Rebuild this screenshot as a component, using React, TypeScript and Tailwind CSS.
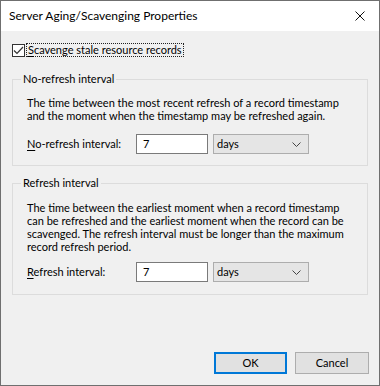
import type { ReactNode } from 'react';

const font = { fontFamily: 'Lato, "Liberation Sans", Arial, sans-serif' };

function Chevron() {
  return (
    <svg width="9" height="5" viewBox="0 0 9 5" className="text-[#444]">
      <path d="M0.5 0.5 L4.5 4.5 L8.5 0.5" fill="none" stroke="currentColor" strokeWidth="1" />
    </svg>
  );
}

function IntervalRow({ label, accel }: { label: string; accel: string }) {
  return (
    <div className="flex items-center">
      <span className="w-[109px]">
        <span className="underline underline-offset-2">{accel}</span>
        {label}
      </span>
      <div className="flex h-[20px] w-[72px] items-center border border-[#7a7a7a] bg-white pl-[6px]">7</div>
      <div className="ml-[5px] flex h-[20px] w-[96px] items-center justify-between border border-[#adadad] bg-[#e5e5e5] pl-[3px] pr-[7px]">
        <span>days</span>
        <Chevron />
      </div>
    </div>
  );
}

function GroupBox({ title, children, className }: { title: string; children: ReactNode; className?: string }) {
  return (
    <fieldset className={`mx-[11px] border border-[#dcdcdc] px-[14px] ${className ?? ''}`}>
      <legend className="ml-[-6px] px-[2px] leading-[14px]">{title}</legend>
      {children}
    </fieldset>
  );
}

export default function App() {
  return (
    <div
      style={font}
      className="flex h-[386px] w-[380px] flex-col border border-[#6f6f6f] bg-[#f0f0f0] text-[11px] text-black"
    >
      <div className="flex h-[30px] items-center justify-between bg-white pl-[8px] pr-[10px] text-[12px]">
        <span>Server Aging/Scavenging Properties</span>
        <svg width="10" height="10" viewBox="0 0 10 10" className="mr-[4px]">
          <path d="M0.5 0.5 L9.5 9.5 M9.5 0.5 L0.5 9.5" stroke="#111" strokeWidth="1" />
        </svg>
      </div>

      <div className="flex flex-1 flex-col">
        <div className="ml-[11px] mt-[12px] flex items-center">
          <span className="flex h-[13px] w-[13px] items-center justify-center border border-[#333] bg-white">
            <svg width="11" height="9" viewBox="0 0 11 9">
              <path d="M1 4.5 L4 7.5 L10 1" fill="none" stroke="#333" strokeWidth="1.2" />
            </svg>
          </span>
          <span className="ml-[1px] border border-dotted border-[#222] px-px leading-[12px]">
            <span className="underline underline-offset-2">S</span>cavenge stale resource records
          </span>
        </div>

        <GroupBox title="No-refresh interval" className="mt-[15px] pb-[11px]">
          <p className="mt-[10px] whitespace-nowrap leading-[13px]">
            The time between the most recent refresh of a record timestamp
            <br />
            and the moment when the timestamp may be refreshed again.
          </p>
          <div className="mt-[12px]">
            <IntervalRow accel="N" label="o-refresh interval:" />
          </div>
        </GroupBox>

        <GroupBox title="Refresh interval" className="mt-[10px] pb-[12px]">
          <p className="mt-[11px] whitespace-nowrap leading-[13px]">
            The time between the earliest moment when a record timestamp
            <br />
            can be refreshed and the earliest moment when the record can be
            <br />
            scavenged. The refresh interval must be longer than the maximum
            <br />
            record refresh period.
          </p>
          <div className="mt-[9px]">
            <IntervalRow accel="R" label="efresh interval:" />
          </div>
        </GroupBox>

        <div className="mb-[11px] mr-[10px] mt-auto flex justify-end gap-[8px]">
          <button className="h-[22px] w-[73px] border-2 border-[#0078d7] bg-[#e1e1e1]">OK</button>
          <button className="h-[22px] w-[74px] border border-[#adadad] bg-[#e1e1e1]">Cancel</button>
        </div>
      </div>
    </div>
  );
}
